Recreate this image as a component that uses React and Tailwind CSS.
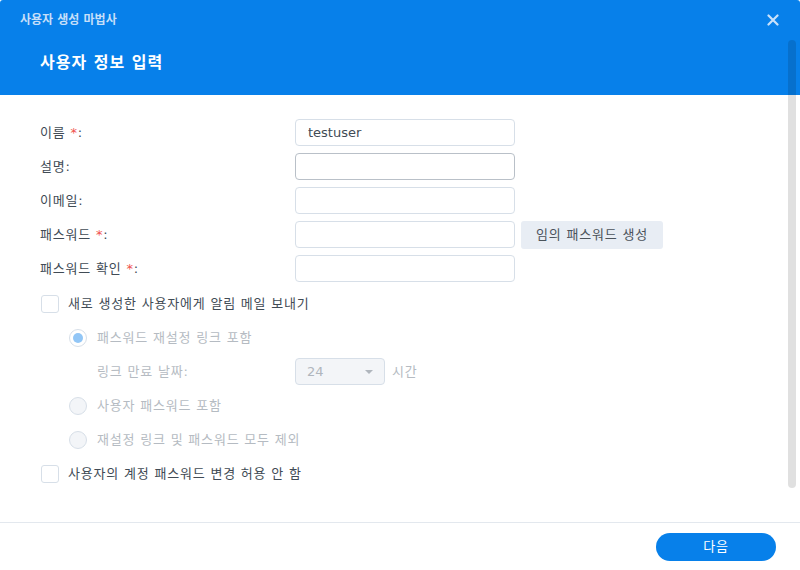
import React, { useState } from "react";

const font = { fontFamily: '"DejaVu Sans", "Noto Sans CJK KR", sans-serif' };

function Field({ label, required, value, focused, children }) {
  return (
    <div className="flex items-center h-[27px]">
      <div className="w-[255px] text-[13px] text-[#414b55] tracking-[0.8px]">
        {label}
        {required && <span className="text-[#f0524d]"> *</span>}:
      </div>
      <input
        defaultValue={value}
        className={`w-[220px] h-[27px] rounded-[4px] border px-[12px] text-[13px] text-[#414b55] outline-none ${
          focused ? "border-[#b9c0c8]" : "border-[#d7dfe8]"
        }`}
        style={font}
      />
      {children}
    </div>
  );
}

function Checkbox({ label }) {
  return (
    <div className="flex items-center h-[27px] pl-[1px]">
      <span className="w-[18px] h-[18px] rounded-[3px] border border-[#d7dfe8] bg-white" />
      <span className="ml-[9px] text-[13px] text-[#414b55] tracking-[0.8px]">{label}</span>
    </div>
  );
}

function Radio({ label, checked }) {
  return (
    <div className="flex items-center h-[27px] pl-[29px]">
      <span
        className={`w-[18px] h-[18px] rounded-full border border-[#d7dfe8] flex items-center justify-center ${
          checked ? "bg-white" : "bg-[#f3f5f8]"
        }`}
      >
        {checked && <span className="w-[10px] h-[10px] rounded-full bg-[#92c6f6]" />}
      </span>
      <span className="ml-[10px] text-[13px] text-[#b5bbc2] tracking-[0.8px]">{label}</span>
    </div>
  );
}

export default function App() {
  const [expire] = useState("24");

  return (
    <div className="relative w-[800px] h-[570px] bg-white flex flex-col overflow-hidden" style={font}>
      <header className="h-[95px] bg-[#0780ea] rounded-t-[3px] flex flex-col">
        <div className="h-[40px] flex items-center justify-between pl-5 pr-[21px]">
          <span className="text-[12px] text-[#c6dff9] font-bold">사용자 생성 마법사</span>
          <svg width="12" height="12" viewBox="0 0 12 12">
            <path d="M1.5 1.5 L10.5 10.5 M10.5 1.5 L1.5 10.5" stroke="#c9e1fa" strokeWidth="2.2" strokeLinecap="round" />
          </svg>
        </div>
        <h1 className="pl-10 mt-[11px] text-[16px] font-bold text-white tracking-[1px]">사용자 정보 입력</h1>
      </header>

      <main className="flex-1 pl-10 pt-6 flex flex-col">
        <div className="flex flex-col gap-[7px]">
          <Field label="이름" required value="testuser" />
          <Field label="설명" focused />
          <Field label="이메일" />
          <Field label="패스워드" required>
            <button className="ml-[6px] h-[28px] w-[142px] rounded-[3px] bg-[#e8edf4] text-[13px] text-[#4b535b] tracking-[0.8px]">
              임의 패스워드 생성
            </button>
          </Field>
          <Field label="패스워드 확인" required />
        </div>

        <div className="flex flex-col gap-[7px] mt-[8px]">
          <Checkbox label="새로 생성한 사용자에게 알림 메일 보내기" />
          <Radio label="패스워드 재설정 링크 포함" checked />
          <div className="flex items-center h-[27px] pl-[57px]">
            <span className="w-[198px] text-[13px] text-[#b5bbc2] tracking-[0.8px]">링크 만료 날짜:</span>
            <div className="w-[90px] h-[27px] rounded-[4px] border border-[#d7dfe8] bg-[#f3f5f8] flex items-center justify-between pl-[11px] pr-[10px]">
              <span className="text-[13px] text-[#b0b6bd]">{expire}</span>
              <svg width="10" height="6" viewBox="0 0 10 6">
                <path d="M1 1 L9 1 L5 5 Z" fill="#b0b6bd" />
              </svg>
            </div>
            <span className="ml-[7px] text-[13px] text-[#b5bbc2] tracking-[0.8px]">시간</span>
          </div>
          <Radio label="사용자 패스워드 포함" />
          <Radio label="재설정 링크 및 패스워드 모두 제외" />
          <Checkbox label="사용자의 계정 패스워드 변경 허용 안 함" />
        </div>
      </main>

      <footer className="h-[48px] border-t border-[#e3e8ee] flex items-center justify-end pr-6">
        <button className="w-[120px] h-[28px] rounded-full bg-[#0780ea] text-white text-[13px] tracking-[0.8px]">다음</button>
      </footer>

      <div className="absolute left-[788px] top-[40px] w-[8px] h-[448px] rounded-full bg-black/[0.12]" />
    </div>
  );
}
